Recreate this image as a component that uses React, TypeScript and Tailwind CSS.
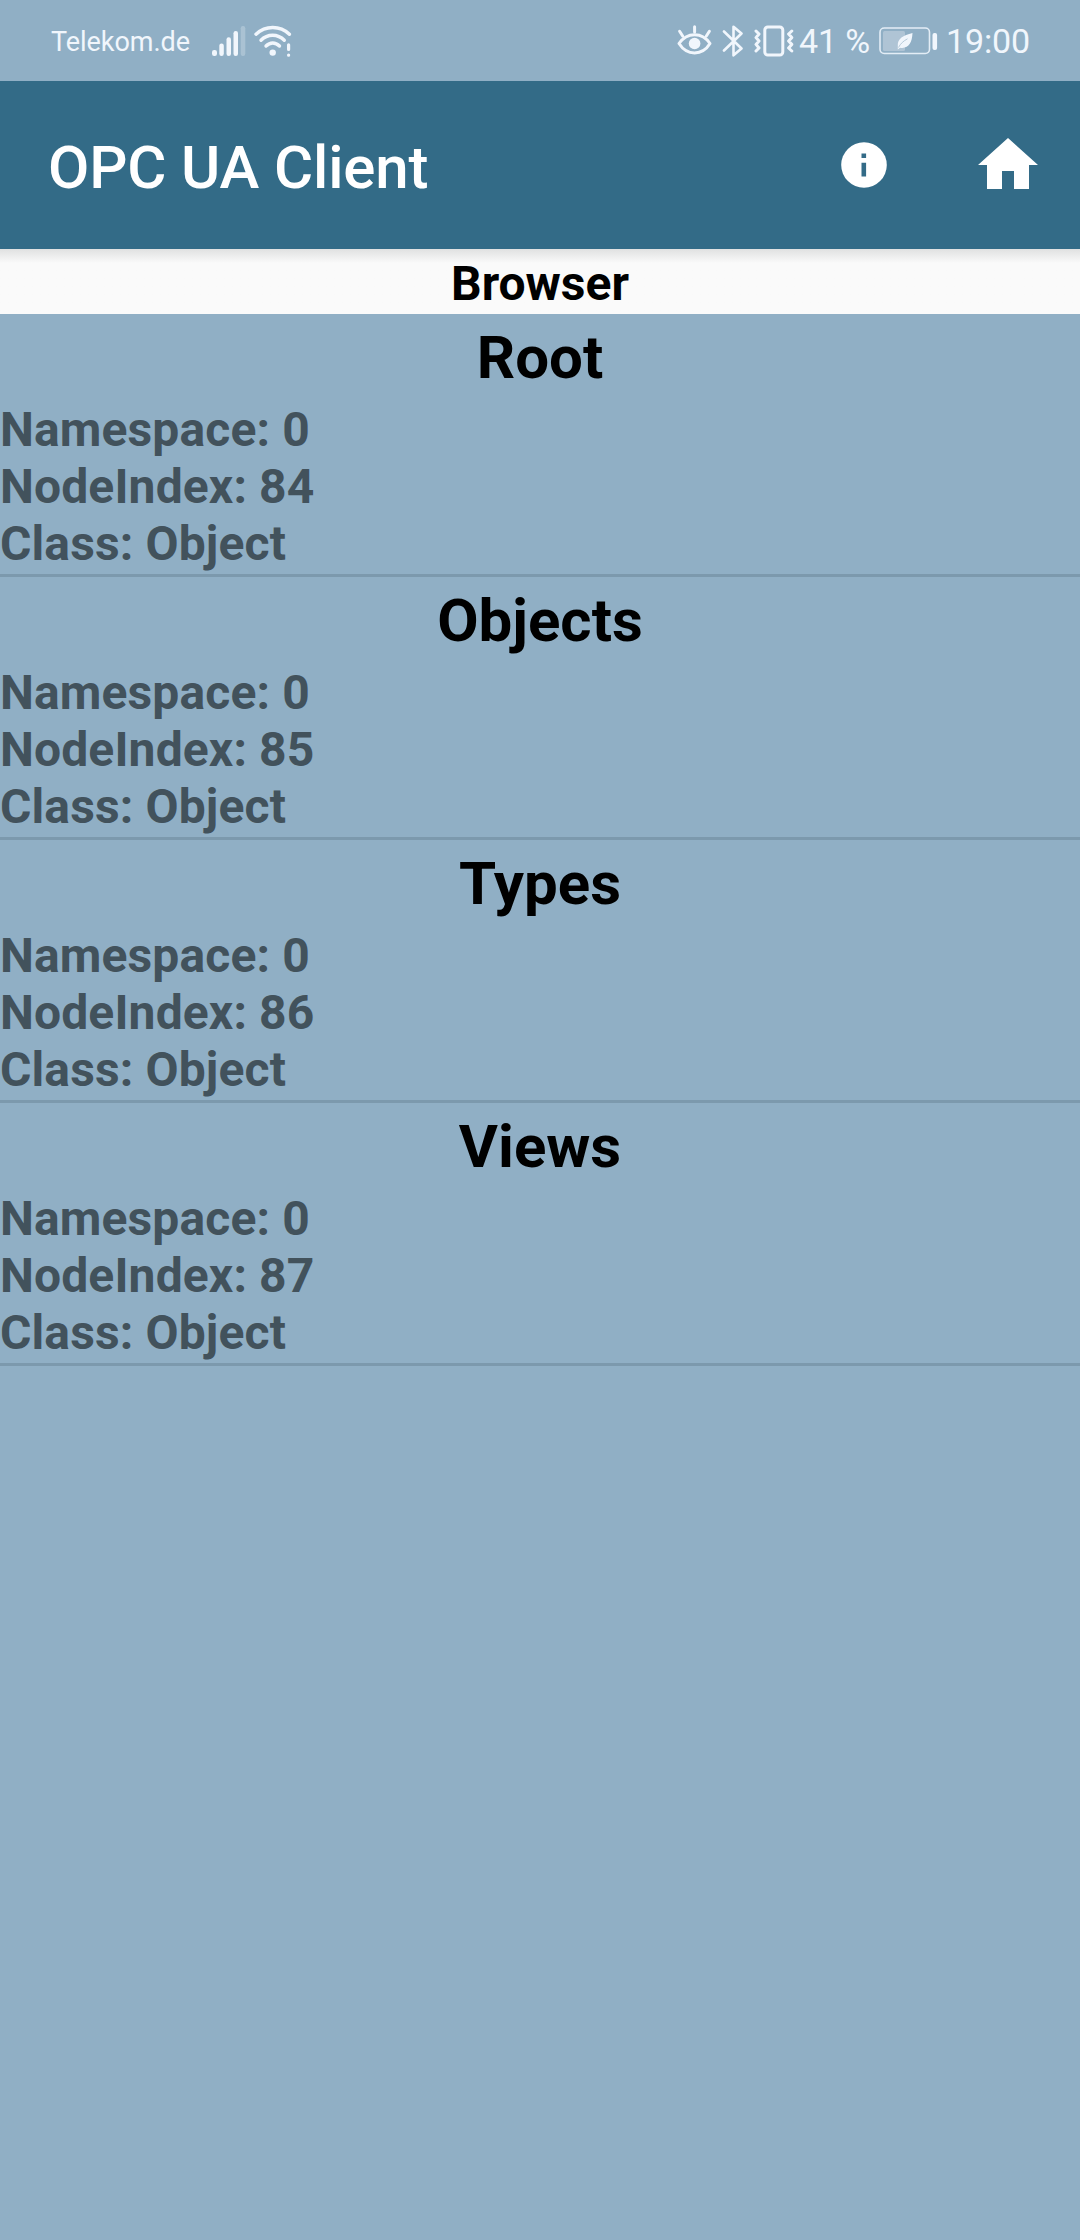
const nodes = [
  { name: 'Root', index: 84 },
  { name: 'Objects', index: 85 },
  { name: 'Types', index: 86 },
  { name: 'Views', index: 87 },
];

function SignalIcon() {
  return (
    <svg className="mt-px ml-[22px] h-8 w-[34px] shrink-0" viewBox="0 0 34 32" fill="#f1f6fc">
      <rect x="0" y="25" width="5" height="6" rx="2.2" />
      <rect x="7.3" y="18.5" width="4.5" height="12.5" rx="2.2" />
      <rect x="14.5" y="12.3" width="4.5" height="18.7" rx="2.2" />
      <rect x="21.5" y="6" width="4.5" height="25" rx="2.2" />
      <rect x="28.7" y="1" width="4.6" height="30" rx="2.2" opacity="0.27" />
    </svg>
  );
}

function WifiIcon() {
  return (
    <svg className="ml-2 h-8 w-[38px] shrink-0" viewBox="0 0 38 32" fill="none" stroke="#f1f6fc" strokeWidth="3.4" strokeLinecap="round">
      <path d="M2 9.2C11.5 0.2 26 0.2 35.4 9.2" />
      <path d="M7 15.3C13.5 8.6 23.7 8.6 30.3 15.3" />
      <path d="M12 21C16 16.9 21.5 16.9 25.5 21" />
      <circle cx="18.7" cy="27.6" r="3.2" fill="#f1f6fc" stroke="none" />
      <path d="M34.6 19.8V24.5M34.6 30V30.2" strokeWidth="3.2" />
    </svg>
  );
}

function EyeIcon() {
  return (
    <svg className="h-[32px] w-[36px] shrink-0" viewBox="0 0 36 32" fill="none" stroke="#f1f6fc" strokeWidth="3" strokeLinecap="round" strokeLinejoin="round">
      <path d="M2 18.5C10 6.7 25.3 6.7 33 18.5C25.3 31 10 31 2 18.5Z" />
      <circle cx="17.6" cy="18.5" r="5.8" fill="#f1f6fc" stroke="none" />
      <path d="M17.6 1.8V7M2.6 6.3L5.8 11.2M32.4 6.3L29.2 11.2" />
    </svg>
  );
}

function BluetoothIcon() {
  return (
    <svg className="ml-[9px] h-8 w-[22px] shrink-0" viewBox="0 0 22 32" fill="none" stroke="#f1f6fc" strokeWidth="2.6" strokeLinecap="round" strokeLinejoin="round">
      <path d="M2 6.5L19.5 23.5L11.5 30.3V1.7L19.5 8.5L2 25.5" />
    </svg>
  );
}

function VibrateIcon() {
  return (
    <svg className="ml-[9px] h-8 w-[42px] shrink-0" viewBox="0 0 42 32" fill="none" stroke="#f1f6fc" strokeWidth="3" strokeLinecap="round" strokeLinejoin="round">
      <rect x="11.8" y="2" width="18" height="28" rx="3" />
      <path d="M3 6L6 9L3 12.6L6 16L3 19.4L6 23L3 26M38.8 6L35.6 9L38.8 12.6L35.6 16L38.8 19.4L35.6 23L38.8 26" strokeWidth="3" />
    </svg>
  );
}

function BatteryIcon() {
  return (
    <svg className="ml-[9px] h-7 w-[59px] shrink-0" viewBox="0 0 59 28">
      <rect x="1" y="1" width="49.5" height="25.5" rx="4.2" fill="none" stroke="#e3edf6" strokeWidth="1.6" />
      <rect x="4" y="4" width="22" height="20" rx="1.5" fill="#afc4d5" />
      <path d="M33.5 6C24 8.7 18.5 11.5 18.8 18.3L18.8 22.5L21 20.7C29.5 22 33 16 33.5 6Z" fill="#f1f6fc" />
      <path d="M19.5 20.5C21.5 16.5 24.5 14 28.5 11.8" fill="none" stroke="#afc4d5" strokeWidth="0.9" />
      <rect x="53.5" y="6" width="4.6" height="17" rx="2" fill="#f1f6fc" />
    </svg>
  );
}

function StatusBar() {
  return (
    <div className="flex h-[81px] items-center justify-between pr-[50px] pl-[51px] text-[#f1f6fc]">
      <div className="flex items-center">
        <span className="pt-[2px] text-[27px] leading-[34px] tracking-[-0.05px]">Telekom.de</span>
        <SignalIcon />
        <WifiIcon />
      </div>
      <div className="flex items-center">
        <EyeIcon />
        <BluetoothIcon />
        <VibrateIcon />
        <span className="ml-1 text-[34px] leading-10 tracking-[-0.1px] whitespace-nowrap">41 %</span>
        <BatteryIcon />
        <span className="ml-2 text-[34px] leading-10 tracking-[-0.15px]">19:00</span>
      </div>
    </div>
  );
}

function AppBar() {
  return (
    <header className="flex h-[168px] items-center bg-[#336b87] pr-[42px] pl-12 text-white">
      <h1 className="grow pt-[5px] text-[60px] leading-[70px] font-medium tracking-[-0.15px]">OPC UA Client</h1>
      <svg className="mb-px h-[46px] w-[46px]" viewBox="0 0 46 46">
        <circle cx="23" cy="23" r="22.8" fill="#fff" />
        <path d="M20.5 11.5h4.6v4.6h-4.6zM20.5 20.7h4.6v13.8h-4.6z" fill="#336b87" />
      </svg>
      <svg className="mb-[3px] ml-[91px] h-[51px] w-[60px]" viewBox="0 0 60 51">
        <path d="M24 51V33H36V51H51V27H60L30 0L0 27H9V51Z" fill="#fff" />
      </svg>
    </header>
  );
}

function NodeItem({ name, index }: { name: string; index: number }) {
  return (
    <li className="h-[263px] border-b-[3px] border-[#7c99ad] pt-[9px]">
      <h3 className="text-center text-[60px] leading-[70px] font-bold text-black">{name}</h3>
      <div className="mt-2 text-[48px] leading-[57px] font-bold tracking-[0.13px] text-[#42525c]">
        <p>Namespace: 0</p>
        <p>NodeIndex: {index}</p>
        <p>Class: Object</p>
      </div>
    </li>
  );
}

export default function App() {
  return (
    <div className="min-h-[2240px] w-full bg-[#90afc5] font-['Roboto',sans-serif]">
      <StatusBar />
      <AppBar />
      <h2 className="h-[65px] bg-[#fafafa] bg-linear-to-b from-[#e0e1e1] to-[#fafafa] to-[14px] pt-[6px] text-center text-[48px] leading-[57px] font-bold text-black">Browser</h2>
      <ul>
        {nodes.map((node) => (
          <NodeItem key={node.index} name={node.name} index={node.index} />
        ))}
      </ul>
    </div>
  );
}
